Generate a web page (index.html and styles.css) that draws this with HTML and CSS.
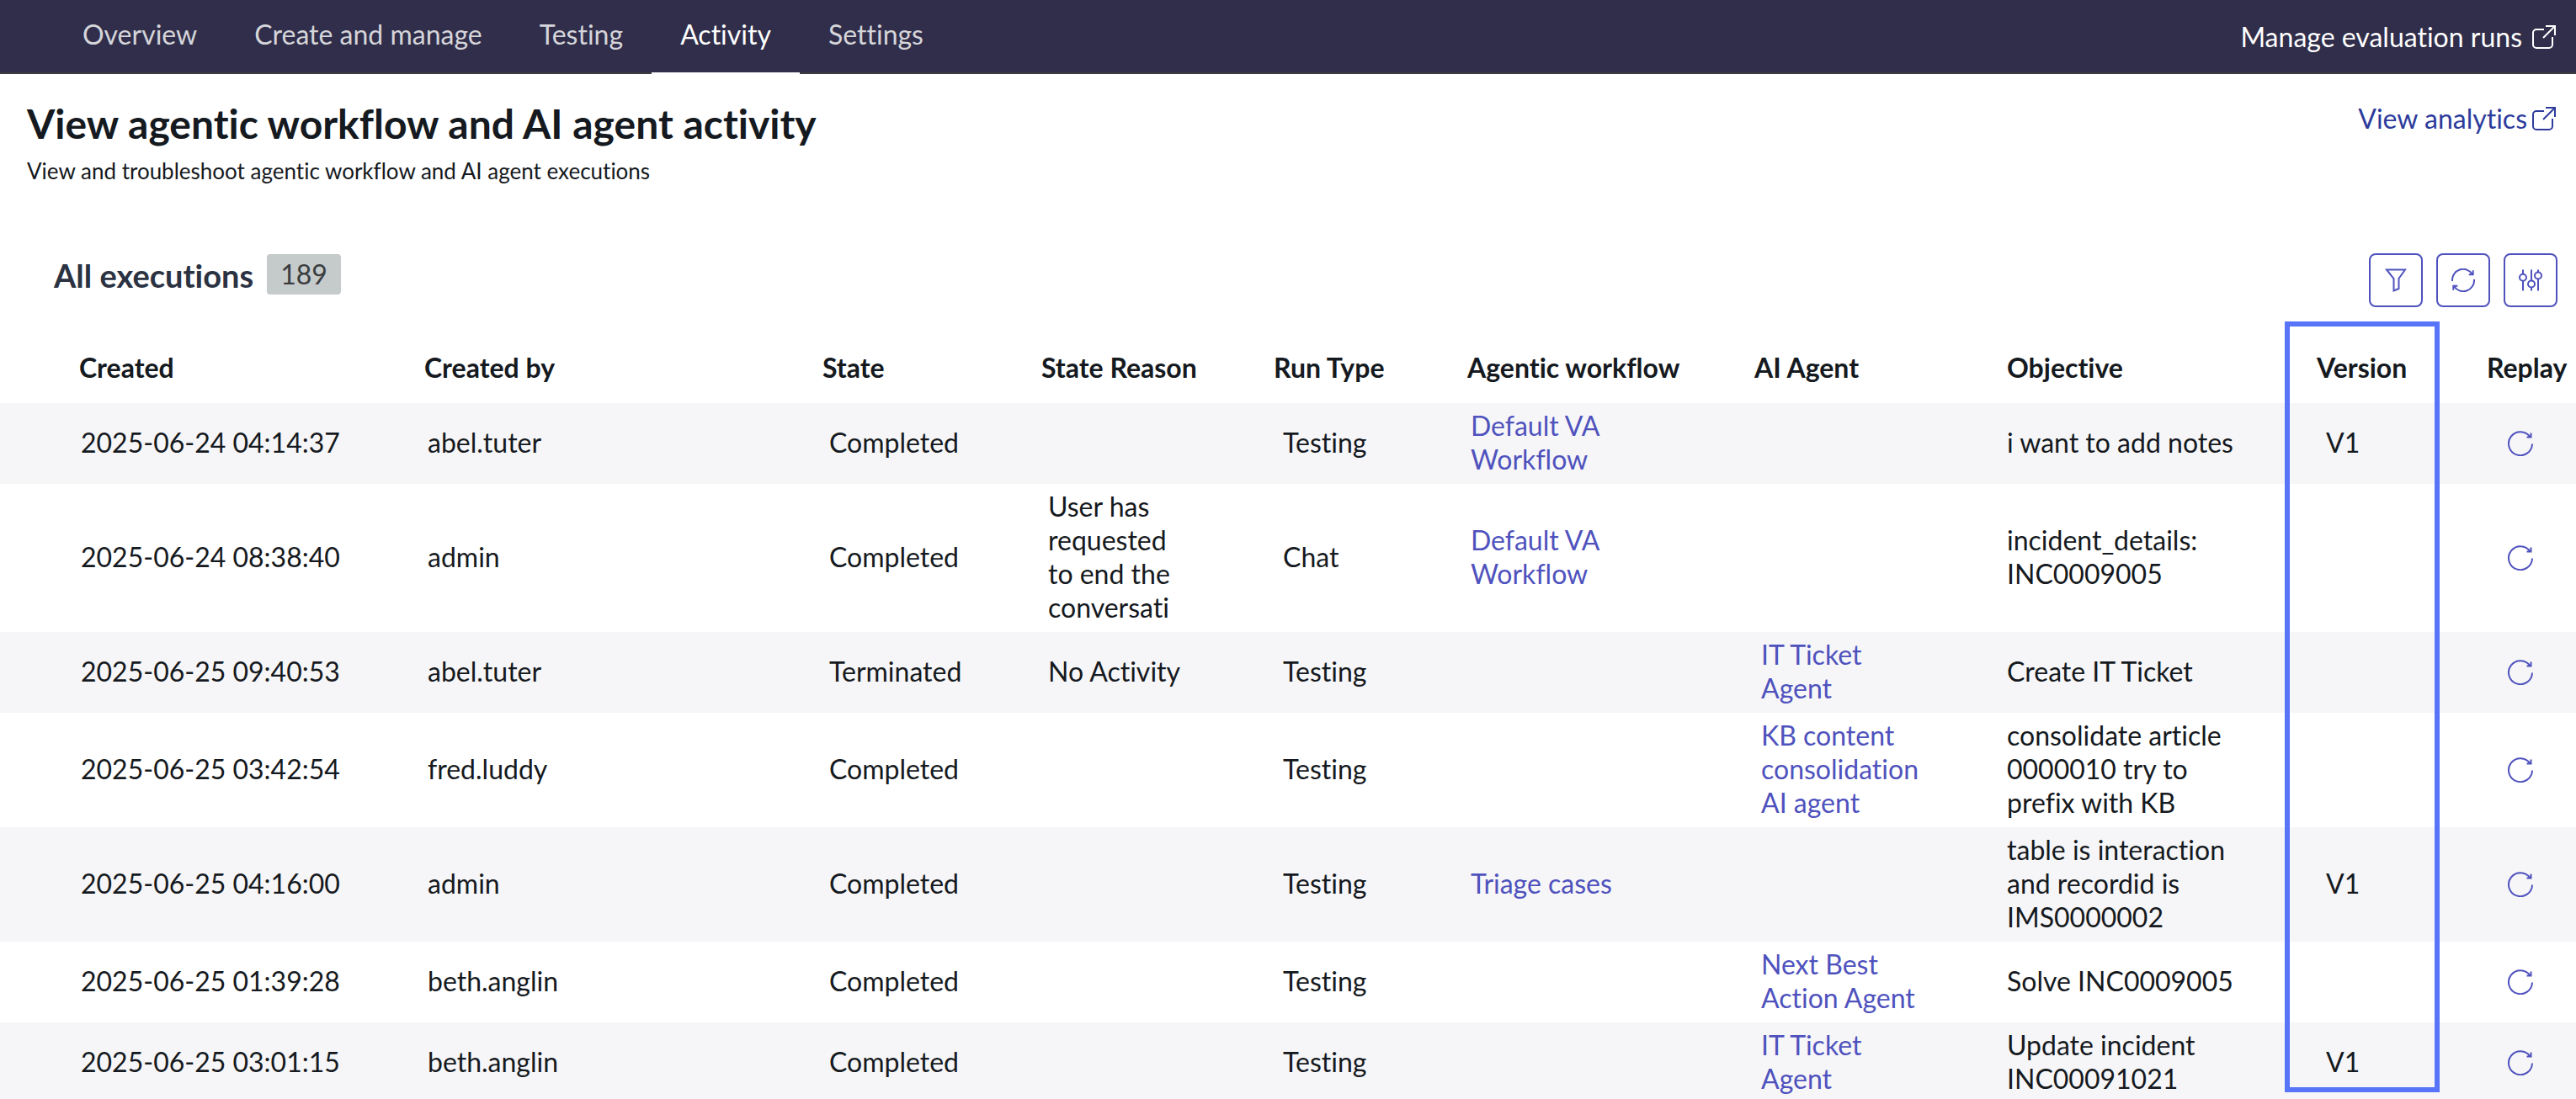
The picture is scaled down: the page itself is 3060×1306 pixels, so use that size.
FILE: index.html
```
<!DOCTYPE html>
<html lang="en">
<head>
  <meta charset="UTF-8">
  <meta name="viewport" content="width=device-width, initial-scale=1.0">
  <title>AI Agent Activity</title>
  <link rel="stylesheet" href="styles.css">
</head>
<body>
  <svg class="sprite" width="0" height="0" aria-hidden="true">
    <symbol id="icon-external" viewBox="0 0 28 28">
      <path d="M14 5H5a4 4 0 0 0-4 4v14a4 4 0 0 0 4 4h15a4 4 0 0 0 4-4V14M16 1h11v11M27 1L13 15"/>
    </symbol>
    <symbol id="icon-replay" viewBox="0 0 30 30">
      <path d="M29 15.500A14 14 0 1 1 26.500 7.200M27.500 2.500V7.400H22.500"/>
    </symbol>
  </svg>

  <header class="topbar">
    <nav class="tabs">
      <a class="tab" href="#">Overview</a>
      <a class="tab" href="#">Create and manage</a>
      <a class="tab" href="#">Testing</a>
      <a class="tab active" href="#">Activity</a>
      <a class="tab" href="#">Settings</a>
    </nav>
    <a class="ext-link light" href="#">Manage evaluation runs
      <svg class="icon"><use href="#icon-external"/></svg>
    </a>
  </header>

  <section class="page-header">
    <div>
      <h1>View agentic workflow and AI agent activity</h1>
      <p>View and troubleshoot agentic workflow and AI agent executions</p>
    </div>
    <a class="ext-link" href="#">View analytics
      <svg class="icon"><use href="#icon-external"/></svg>
    </a>
  </section>

  <section class="list-header">
    <h2>All executions</h2>
    <span class="count">189</span>
    <div class="actions">
      <button type="button" aria-label="Filter">
        <svg class="icon" viewBox="0 0 28 28"><path d="M3 1.500H25L17.500 12V24L11.500 26.500V12Z"/></svg>
      </button>
      <button type="button" aria-label="Refresh">
        <svg class="icon" viewBox="0 0 28 28"><path d="M1 15A13 13 0 0 1 25 7M25.700 2.300V7.200H20.700M27 13A13 13 0 0 1 3 21M2.300 25.700V20.800H7.300"/></svg>
      </button>
      <button type="button" aria-label="List settings">
        <svg class="icon" viewBox="0 0 28 28">
          <path d="M5 1.500V6.500M5 15V26.500M15 1.500V14M15 22V26.500M23 1.500V4.500M23 13V26.500"/>
          <circle cx="5" cy="10.800" r="4"/>
          <circle cx="15" cy="18.500" r="4"/>
          <circle cx="23" cy="8.500" r="4"/>
        </svg>
      </button>
    </div>
  </section>

  <main class="table-wrap">
    <table>
      <colgroup>
        <col class="col-created">
        <col class="col-by">
        <col class="col-state">
        <col class="col-reason">
        <col class="col-type">
        <col class="col-workflow">
        <col class="col-agent">
        <col class="col-objective">
        <col class="col-version">
        <col class="col-replay">
      </colgroup>
      <thead>
        <tr>
          <th scope="col">Created</th>
          <th scope="col">Created by</th>
          <th scope="col" class="mid">State</th>
          <th scope="col" class="mid">State Reason</th>
          <th scope="col" class="near">Run Type</th>
          <th scope="col">Agentic workflow</th>
          <th scope="col" class="mid">AI Agent</th>
          <th scope="col" class="far">Objective</th>
          <th scope="col" class="near">Version</th>
          <th scope="col">Replay</th>
        </tr>
      </thead>
      <tbody>
        <tr>
          <td>2025-06-24 04:14:37</td>
          <td>abel.tuter</td>
          <td>Completed</td>
          <td class="reason"></td>
          <td>Testing</td>
          <td><a href="#">Default VA Workflow</a></td>
          <td></td>
          <td>i want to add notes</td>
          <td>V1</td>
          <td class="replay"><button type="button" aria-label="Replay"><svg><use href="#icon-replay"/></svg></button></td>
        </tr>
        <tr>
          <td>2025-06-24 08:38:40</td>
          <td>admin</td>
          <td>Completed</td>
          <td class="reason">User has requested to end the conversati</td>
          <td>Chat</td>
          <td><a href="#">Default VA Workflow</a></td>
          <td></td>
          <td>incident_details: INC0009005</td>
          <td></td>
          <td class="replay"><button type="button" aria-label="Replay"><svg><use href="#icon-replay"/></svg></button></td>
        </tr>
        <tr>
          <td>2025-06-25 09:40:53</td>
          <td>abel.tuter</td>
          <td>Terminated</td>
          <td class="reason">No Activity</td>
          <td>Testing</td>
          <td></td>
          <td><a href="#">IT Ticket Agent</a></td>
          <td>Create IT Ticket</td>
          <td></td>
          <td class="replay"><button type="button" aria-label="Replay"><svg><use href="#icon-replay"/></svg></button></td>
        </tr>
        <tr>
          <td>2025-06-25 03:42:54</td>
          <td>fred.luddy</td>
          <td>Completed</td>
          <td class="reason"></td>
          <td>Testing</td>
          <td></td>
          <td><a href="#">KB content consolidation AI agent</a></td>
          <td>consolidate article 0000010 try to prefix with KB</td>
          <td></td>
          <td class="replay"><button type="button" aria-label="Replay"><svg><use href="#icon-replay"/></svg></button></td>
        </tr>
        <tr>
          <td>2025-06-25 04:16:00</td>
          <td>admin</td>
          <td>Completed</td>
          <td class="reason"></td>
          <td>Testing</td>
          <td><a href="#">Triage cases</a></td>
          <td></td>
          <td>table is interaction and recordid is IMS0000002</td>
          <td>V1</td>
          <td class="replay"><button type="button" aria-label="Replay"><svg><use href="#icon-replay"/></svg></button></td>
        </tr>
        <tr>
          <td>2025-06-25 01:39:28</td>
          <td>beth.anglin</td>
          <td>Completed</td>
          <td class="reason"></td>
          <td>Testing</td>
          <td></td>
          <td><a href="#">Next Best Action Agent</a></td>
          <td>Solve INC0009005</td>
          <td></td>
          <td class="replay"><button type="button" aria-label="Replay"><svg><use href="#icon-replay"/></svg></button></td>
        </tr>
        <tr>
          <td>2025-06-25 03:01:15</td>
          <td>beth.anglin</td>
          <td>Completed</td>
          <td class="reason"></td>
          <td>Testing</td>
          <td></td>
          <td><a href="#">IT Ticket Agent</a></td>
          <td>Update incident INC00091021</td>
          <td>V1</td>
          <td class="replay"><button type="button" aria-label="Replay"><svg><use href="#icon-replay"/></svg></button></td>
        </tr>
      </tbody>
    </table>
    <div class="highlight"></div>
  </main>
</body>
</html>
```

FILE: styles.css
```
* {
  box-sizing: border-box;
}
body {
  font-family: Lato, "Open Sans", sans-serif;
  font-size: 32px;
  font-variant-ligatures: none;
  line-height: 40px;
  color: #151920;
  background-color: #fff;
  margin: 0;
  height: 100vh;
  display: flex;
  flex-direction: column;
}
h1, h2, p {
  margin: 0;
}
a {
  color: #4f52bd;
  text-decoration: none;
}
svg {
  display: block;
  fill: none;
  stroke: currentColor;
  stroke-width: 2;
}
.sprite {
  position: absolute;
}
.icon {
  width: 28px;
  height: 28px;
}

/* top navigation */
.topbar {
  display: flex;
  justify-content: space-between;
  height: 88px;
  padding: 0 24px 0 64px;
  background-color: #302e4a;
  box-shadow: inset 0 -2px #3a3d3f;
}
.tabs {
  display: flex;
}
.tab {
  padding: 21px 34px 0;
  color: #d5d5da;
  border-bottom: 2px solid transparent;
}
.tab.active {
  color: #fff;
  border-bottom-color: #fff;
}
.ext-link {
  display: flex;
  align-items: center;
  align-self: flex-start;
  gap: 6px;
  padding-top: 3px;
  color: #2d3c9c;
}
.ext-link.light {
  gap: 12px;
  padding-top: 24px;
  color: #fff;
}

/* page title */
.page-header {
  display: flex;
  justify-content: space-between;
  padding: 30px 24px 0 32px;
}
.page-header h1 {
  font-size: 48px;
  line-height: 58px;
}
.page-header p {
  font-size: 26px;
  line-height: 54px;
}

/* list title and actions */
.list-header {
  display: flex;
  align-items: flex-start;
  padding: 71px 22px 0 64px;
}
.list-header h2 {
  font-size: 38px;
  line-height: 52px;
  color: #2b3242;
}
.count {
  margin-top: 1px;
  margin-left: 16px;
  padding: 4px 16px;
  color: #3a3d3f;
  background-color: #c5cacb;
  border-radius: 4px;
}
.actions {
  display: flex;
  gap: 16px;
  margin-left: auto;
}
.actions button {
  display: flex;
  align-items: center;
  justify-content: center;
  width: 64px;
  height: 64px;
  padding: 0;
  color: #4f52bd;
  background-color: #fff;
  border: 2px solid #4f52bd;
  border-radius: 8px;
}

/* executions table */
.table-wrap {
  position: relative;
  flex: 1;
  min-height: 0;
  margin-top: 17px;
  overflow: hidden;
}
table {
  width: 100%;
  table-layout: fixed;
  border-collapse: collapse;
}
.col-created { width: 492px; }
.col-by { width: 477px; }
.col-state { width: 260px; }
.col-reason { width: 279px; }
.col-type { width: 223px; }
.col-workflow { width: 345px; }
.col-agent { width: 292px; }
.col-objective { width: 379px; }
.col-version { width: 195px; }
.col-replay { width: 118px; }
th {
  height: 97px;
  padding: 12px 0 0 12px;
  text-align: left;
  white-space: nowrap;
}
th.far {
  padding-left: 16px;
}
th.mid {
  padding-left: 8px;
}
th.near {
  padding-left: 5px;
}
td {
  padding: 7px 80px 9px 16px;
}
th:first-child {
  padding-left: 94px;
}
td:first-child {
  padding-left: 96px;
}
td.reason {
  padding-right: 100px;
}
tbody tr:nth-child(odd) {
  background-color: #f6f6f8;
}
td.replay {
  padding: 0 0 0 37px;
}
.replay button {
  display: block;
  padding: 0;
  color: #4f52bd;
  background: none;
  border: none;
}
.replay svg {
  width: 30px;
  height: 30px;
}
.highlight {
  position: absolute;
  top: 0;
  right: 162px;
  bottom: 8px;
  width: 184px;
  border: 6px solid #5874f8;
}
```
